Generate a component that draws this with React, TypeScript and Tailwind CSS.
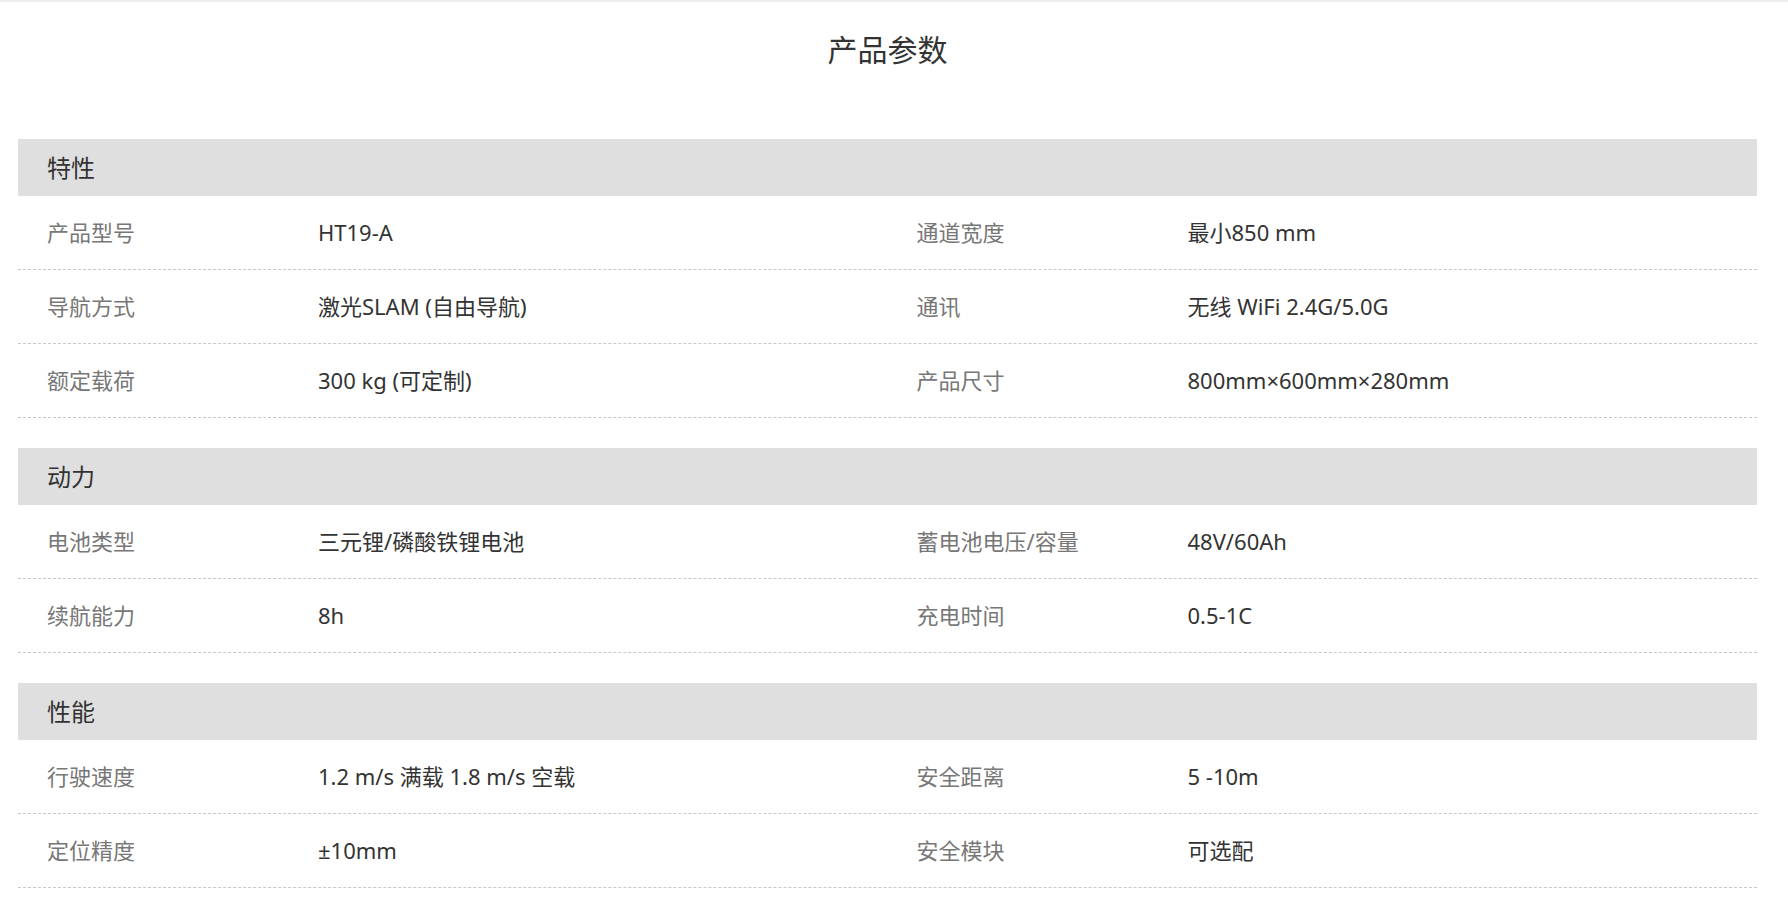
const sections = [
  {
    title: "特性",
    rows: [
      ["产品型号", "HT19-A", "通道宽度", "最小850 mm"],
      ["导航方式", "激光SLAM (自由导航)", "通讯", "无线 WiFi 2.4G/5.0G"],
      ["额定载荷", "300 kg (可定制)", "产品尺寸", "800mm×600mm×280mm"],
    ],
  },
  {
    title: "动力",
    rows: [
      ["电池类型", "三元锂/磷酸铁锂电池", "蓄电池电压/容量", "48V/60Ah"],
      ["续航能力", "8h", "充电时间", "0.5-1C"],
    ],
  },
  {
    title: "性能",
    rows: [
      ["行驶速度", "1.2 m/s 满载 1.8 m/s 空载", "安全距离", "5 -10m"],
      ["定位精度", "±10mm", "安全模块", "可选配"],
    ],
  },
];

const font = {
  fontFamily: '"Noto Sans", "Noto Sans CJK SC", sans-serif',
};

const Cell = ({ label, value }: { label: string; value: string }) => (
  <div className="flex items-center pl-[29px]">
    <span className="w-[271px] shrink-0 text-[#777]">{label}</span>
    <span className="text-[#333]">{value}</span>
  </div>
);

export default function App() {
  return (
    <div className="min-h-screen bg-white border-t-2 border-[#efefef]" style={font}>
      <div className="ml-[18px] w-[1739px]">
        <h1 className="pt-[25px] pb-[67px] text-center text-[30px] leading-[45px] font-normal text-[#333]">
          产品参数
        </h1>

        {sections.map((section) => (
          <div key={section.title} className="mb-[30px]">
            <div className="h-[57px] flex items-center bg-[#dfdfdf] pl-[29px] text-[24px] text-[#333]">
              {section.title}
            </div>
            {section.rows.map((row, i) => (
              <div
                key={i}
                className="grid grid-cols-2 h-[74px] border-b border-dashed border-[#c8c8c8] text-[22px]"
              >
                <Cell label={row[0]} value={row[1]} />
                <Cell label={row[2]} value={row[3]} />
              </div>
            ))}
          </div>
        ))}
      </div>
    </div>
  );
}
